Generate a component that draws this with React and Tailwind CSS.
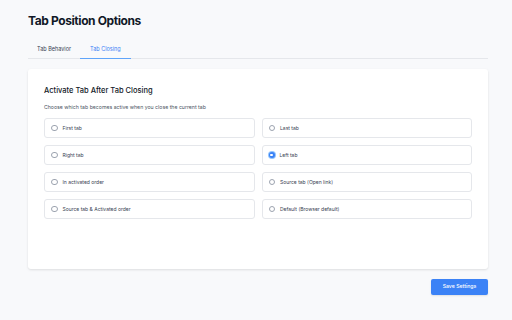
import { useState } from 'react';

const OPTIONS = [
    { key: 'first', label: 'First tab' },
    { key: 'last', label: 'Last tab' },
    { key: 'right', label: 'Right tab' },
    { key: 'left', label: 'Left tab' },
    { key: 'activated', label: 'In activated order' },
    { key: 'source', label: 'Source tab (Open link)' },
    { key: 'sourceActivated', label: 'Source tab & Activated order' },
    { key: 'default', label: 'Default (Browser default)' },
];

function Radio({ checked }) {
    if (checked) {
        return (
            <span className="flex h-[6px] w-[6px] shrink-0 items-center justify-center rounded-full bg-[#3b82f6] ring-1 ring-[#93c5fd]">
                <span className="h-[2.5px] w-[2.5px] rounded-full bg-white" />
            </span>
        );
    }
    return <span className="h-[6.5px] w-[6.5px] shrink-0 rounded-full border-[0.75px] border-[#9ca3af] bg-white" />;
}

export default function App() {
    const [tab, setTab] = useState('closing');
    const [selected, setSelected] = useState('left');

    return (
        <div
            className="min-h-screen bg-[#f8f9fb] pl-[28px] pr-[24px] pt-[12px] text-[#111827]"
            style={{ fontFamily: 'Inter, "Noto Sans", sans-serif' }}
        >
            <h1 className="text-[12px] font-bold leading-[17px] tracking-[-0.4px]">Tab Position Options</h1>

            <div className="mt-[11px] flex border-b border-[#e5e7eb]">
                <button
                    onClick={() => setTab('behavior')}
                    className={
                        tab === 'behavior'
                            ? '-mb-px border-b border-[#60a5fa] px-[9px] py-[5px] text-[5.5px] leading-[8px] text-[#3b82f6]'
                            : '-mb-px border-b border-transparent px-[9px] py-[5px] text-[5.5px] leading-[8px] text-[#374151]'
                    }
                >
                    Tab Behavior
                </button>
                <button
                    onClick={() => setTab('closing')}
                    className={
                        tab === 'closing'
                            ? '-mb-px border-b border-[#60a5fa] px-[10px] py-[5px] text-[5.5px] leading-[8px] text-[#3b82f6]'
                            : '-mb-px border-b border-transparent px-[10px] py-[5px] text-[5.5px] leading-[8px] text-[#374151]'
                    }
                >
                    Tab Closing
                </button>
            </div>

            <div className="mt-[10px] h-[200px] rounded-[3px] bg-white px-[16px] pt-[17px] shadow-[0_1px_3px_rgba(0,0,0,0.08),0_1px_2px_rgba(0,0,0,0.04)]">
                <div className="text-[7.5px] font-medium leading-[10px] text-[#111827]">Activate Tab After Tab Closing</div>
                <div className="mt-[7px] text-[5.2px] leading-[8px] text-[#4b5563]">
                    Choose which tab becomes active when you close the current tab
                </div>

                <div className="mt-[7px] grid grid-cols-2 gap-[7px]">
                    {OPTIONS.map((o) => (
                        <label
                            key={o.key}
                            onClick={() => setSelected(o.key)}
                            className="flex h-[20px] cursor-pointer items-center gap-[5px] rounded-[3px] border border-[#e5e7eb] bg-white pl-[6px]"
                        >
                            <Radio checked={selected === o.key} />
                            <span className="text-[5px] leading-[8px] text-[#374151]">{o.label}</span>
                        </label>
                    ))}
                </div>
            </div>

            <div className="mt-[10px] flex justify-end">
                <button className="h-[16px] w-[57px] rounded-[2px] bg-[#3b82f6] text-[5.2px] font-medium text-white shadow-[0_1px_2px_rgba(0,0,0,0.1)]">
                    Save Settings
                </button>
            </div>
        </div>
    );
}
